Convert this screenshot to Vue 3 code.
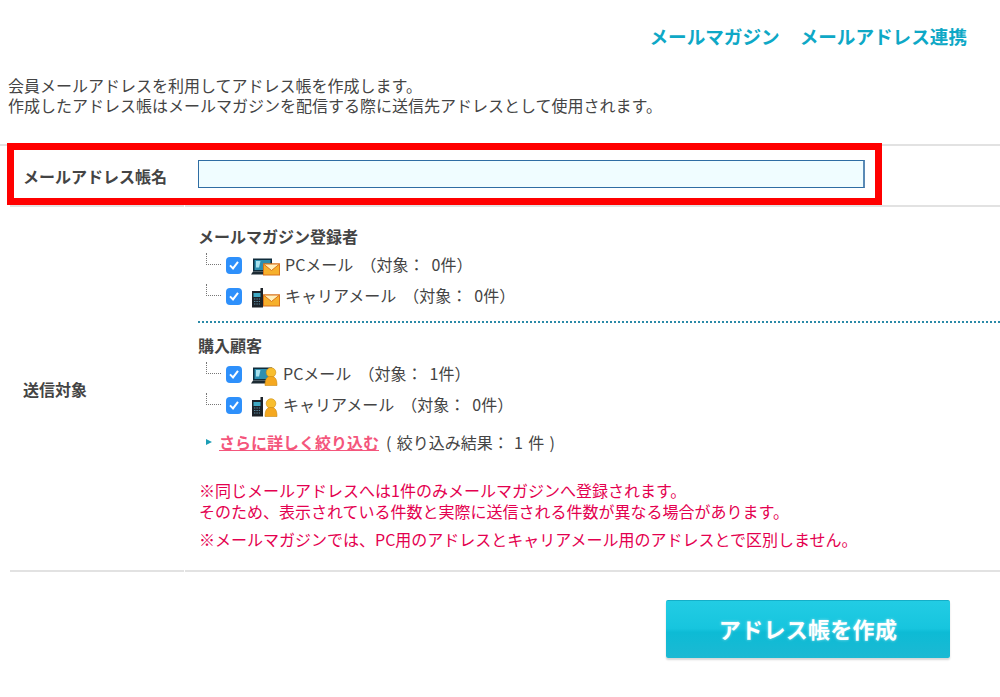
<script setup>
const groups = [
  {
    title: 'メールマガジン登録者',
    badge: 'mail',
    rows: [
      { device: 'pc', text: 'PCメール （対象： 0件）' },
      { device: 'phone', text: 'キャリアメール （対象： 0件）' }
    ]
  },
  {
    title: '購入顧客',
    badge: 'person',
    rows: [
      { device: 'pc', text: 'PCメール （対象： 1件）' },
      { device: 'phone', text: 'キャリアメール （対象： 0件）' }
    ]
  }
]
</script>

<template>
  <div class="page">
    <nav class="top-links">
      <a>メールマガジン</a>
      <a>メールアドレス連携</a>
    </nav>
    <p class="intro">
      会員メールアドレスを利用してアドレス帳を作成します。<br />
      作成したアドレス帳はメールマガジンを配信する際に送信先アドレスとして使用されます。
    </p>

    <div class="form-row name-row">
      <div class="label">メールアドレス帳名</div>
      <div class="field"><div class="text-input"></div></div>
      <div class="highlight"></div>
    </div>

    <div class="form-row target-row">
      <div class="label">送信対象</div>
      <div class="field targets">
        <section v-for="(g, i) in groups" :key="g.title" class="group" :class="{ first: i === 0 }">
          <h3>{{ g.title }}</h3>
          <div v-for="r in g.rows" :key="r.text" class="opt" :class="g.badge">
            <span class="branch"></span>
            <span class="check">
              <svg width="12" height="12" viewBox="0 0 12 12"><path d="M2 6.4 L5 9.4 L10 2.8" fill="none" stroke="#fff" stroke-width="2" /></svg>
            </span>
            <svg class="icon" width="30" height="20" viewBox="0 0 30 20">
              <g v-if="r.device === 'pc'">
                <rect x="2" y="1.5" width="19" height="13" fill="#0f2b3a" />
                <rect x="3.5" y="3" width="16" height="10" fill="#2d8fb0" />
                <path d="M5 4 H9.5 L8 10.5 H5 Z" fill="#a8e2ee" />
                <path d="M2 14.5 H21 L22 17.5 H0 Z" fill="#1c2a33" />
              </g>
              <g v-else>
                <rect x="9.5" y="0" width="2.5" height="4" fill="#1c2228" />
                <rect x="1" y="3" width="11" height="16.5" fill="#1c2228" />
                <rect x="2.5" y="5" width="7" height="4" fill="#3fa9c4" />
                <path d="M3 11h6M3 13.5h6M3 16h6" stroke="#5b8aa2" stroke-width="1.2" stroke-dasharray="1.4 1" />
              </g>
              <g v-if="g.badge === 'mail'">
                <rect x="12.5" y="7" width="16" height="11" fill="#f6b02c" stroke="#d9731a" />
                <path d="M12.5 7 L20.5 13.5 L28.5 7 Z" fill="#fff0bd" stroke="#d9731a" />
              </g>
              <g v-else>
                <circle cx="20" cy="6.5" r="4.8" fill="#f8be2e" stroke="#c98a12" stroke-width=".6" />
                <path d="M14 19.5 C14 12 16.5 10.5 20 10.5 C23.5 10.5 26 12 26 19.5 Z" fill="#f5a81f" stroke="#c98a12" stroke-width=".6" />
              </g>
            </svg>
            <span class="opt-text">{{ r.text }}</span>
          </div>
        </section>

        <div class="refine">
          <span class="arrow"></span>
          <a>さらに詳しく絞り込む</a>
          <span class="result">( 絞り込み結果： 1 件 )</span>
        </div>

        <div class="notes">
          <p>※同じメールアドレスへは1件のみメールマガジンへ登録されます。<br />そのため、表示されている件数と実際に送信される件数が異なる場合があります。</p>
          <p>※メールマガジンでは、PC用のアドレスとキャリアメール用のアドレスとで区別しません。</p>
        </div>
      </div>
    </div>

    <div class="actions">
      <button type="button">アドレス帳を作成</button>
    </div>
  </div>
</template>

<style>
body {
  background: #fff;
}
</style>

<style scoped>
.page {
  width: 1000px;
  height: 697px;
  overflow: hidden;
  box-sizing: border-box;
  font-family: "Noto Sans CJK JP", "Noto Sans", sans-serif;
  color: #444;
  font-size: 16px;
}
.top-links {
  display: flex;
  justify-content: flex-end;
  gap: 20px;
  padding: 23px 33px 0 0;
  height: 52px;
  box-sizing: border-box;
  line-height: 26px;
  font-size: 18.6px;
  font-weight: 700;
  color: #0ea8c6;
}
.intro {
  margin: 0;
  padding: 23px 0 0 8px;
  height: 92px;
  box-sizing: border-box;
  line-height: 20px;
}
.form-row {
  display: grid;
  grid-template-columns: 185px 1fr;
  position: relative;
}
.label {
  margin-left: 10px;
  padding-left: 13px;
  margin-right: 1px;
  display: flex;
  align-items: center;
  font-size: 16px;
  font-weight: 700;
  border-bottom: 2px solid #e2e2e2;
}
.field {
  border-bottom: 2px solid #e2e2e2;
  padding-left: 13px;
}
.name-row {
  height: 63px;
  box-sizing: border-box;
  border-top: 2px solid #e2e2e2;
}
.name-row .field {
  padding-top: 14px;
}
.text-input {
  width: 667px;
  height: 28px;
  box-sizing: border-box;
  background: #f0fdff;
  border: 1px solid #2f6da3;
  border-right: 2px solid #5a8ab5;
}
.highlight {
  position: absolute;
  left: 7px;
  top: -3px;
  width: 875px;
  height: 62px;
  box-sizing: border-box;
  border: 7px solid #f00;
}
.target-row {
  height: 365px;
  box-sizing: border-box;
}
.targets {
  padding-top: 18px;
}
.group h3 {
  margin: 0;
  font-size: 16px;
  line-height: 23px;
  font-weight: 700;
}
.group.first {
  box-sizing: border-box;
  height: 98px;
  margin-bottom: 11px;
  border-bottom: 2px dotted #2b8aa8;
}
.opt {
  display: flex;
  align-items: center;
  height: 31px;
  padding-left: 8px;
  position: relative;
}
.branch {
  width: 15px;
  height: 12px;
  margin-bottom: 9px;
  box-sizing: border-box;
  border-left: 1px dotted #777;
  border-bottom: 1px dotted #777;
}
.check {
  margin-left: 5px;
  margin-top: 3px;
  width: 16px;
  height: 17px;
  border-radius: 4px;
  background: #2e90fb;
  display: flex;
  align-items: center;
  justify-content: center;
}
.icon {
  margin-left: 9px;
  margin-top: 6px;
}
.opt-text {
  margin-left: 4px;
  white-space: pre;
  line-height: 20px;
  word-spacing: 3.5px;
}
.person .opt-text {
  margin-left: 2px;
}
.refine {
  display: flex;
  align-items: center;
  height: 24px;
  margin-top: 11px;
  padding-left: 8px;
}
.arrow {
  width: 0;
  height: 0;
  border-left: 6px solid #1b9db5;
  border-top: 3.5px solid transparent;
  border-bottom: 3.5px solid transparent;
  margin-right: 7px;
}
.refine a {
  font-size: 16px;
  font-weight: 700;
  color: #f4567c;
  text-decoration: underline;
}
.result {
  margin-left: 7px;
  white-space: pre;
  word-spacing: 1.7px;
}
.notes {
  margin-top: 26px;
  color: #e4004f;
  line-height: 21px;
  padding-left: 1px;
}
.notes p {
  margin: 0 0 7px;
}
.actions {
  display: flex;
  justify-content: flex-end;
  padding: 28px 50px 0 0;
}
.actions button {
  width: 284px;
  height: 58px;
  border: 0;
  border-top: 1px solid #14aec8;
  border-radius: 2px;
  background: linear-gradient(#22cce4 0%, #17c5de 48%, #0dbbd5 55%, #1cb9d3 100%);
  box-shadow: 0 2px 2px rgba(0, 0, 0, .16);
  color: #fff;
  font-family: inherit;
  font-size: 22px;
  font-weight: 700;
  letter-spacing: .3px;
  text-shadow: 0 0 3px rgba(255, 255, 255, .55);
  padding: 0 0 3px;
}
</style>
